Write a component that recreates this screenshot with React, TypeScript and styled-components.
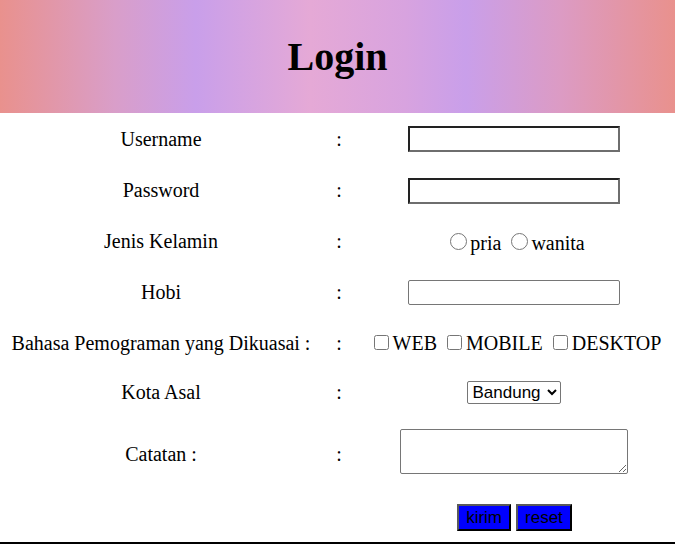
import React from "react";
import styled, { createGlobalStyle } from "styled-components";

const GlobalStyle = createGlobalStyle`
  html, body { margin: 0; padding: 0; background: #ffffff; }
  body { font-family: "Liberation Serif", "Times New Roman", serif; color: #000; }
`;

const Header = styled.header`
  height: 113px;
  display: flex;
  align-items: center;
  justify-content: center;
  background: linear-gradient(
    to right,
    #e9918d 0%,
    #d99ec9 17%,
    #c99fea 29%,
    #e5a9d6 46%,
    #d8a3df 60%,
    #c99fea 69%,
    #dc9bc4 83%,
    #e9918d 100%
  );
`;

const Title = styled.h1`
  margin: 0;
  font-size: 40px;
  font-weight: bold;
  line-height: 46px;
`;

const Form = styled.form`
  display: flex;
  flex-direction: column;
  font-size: 20px;
`;

const Row = styled.div<{ $h: number; $top?: boolean }>`
  display: grid;
  grid-template-columns: 322px 36px 1fr;
  height: ${(p) => p.$h}px;
  align-items: ${(p) => (p.$top ? "start" : "center")};
  box-sizing: border-box;
  padding-top: ${(p) => (p.$top ? "16px" : "0")};
`;

const Label = styled.div<{ $shift?: number }>`
  text-align: center;
  line-height: 23px;
  transform: translateY(${(p) => p.$shift ?? 0}px);
`;

const Colon = styled.div<{ $shift?: number }>`
  text-align: center;
  line-height: 23px;
  padding-right: 2px;
  transform: translateY(${(p) => p.$shift ?? 0}px);
`;

const Field = styled.div`
  display: flex;
  justify-content: center;
  align-items: center;
  line-height: 23px;
`;

const InlineGroup = styled.div`
  white-space: nowrap;
  line-height: 23px;
  padding-right: 3px;
`;

const BoxedInput = styled.input`
  box-sizing: border-box;
  width: 212px;
  height: 26px;
  margin: 0 5px 0 0;
  border-style: solid;
  border-width: 2px;
  border-color: #222222 #6e6e6e #6e6e6e #222222;
  background: #fff;
  padding: 1px 3px;
  font-size: 16px;
`;

const PlainInput = styled.input`
  box-sizing: border-box;
  width: 212px;
  height: 25px;
  margin: 0 5px 0 0;
  border: 1px solid #767676;
  border-radius: 2px;
  background: #fff;
  padding: 1px 3px;
  font-size: 16px;
`;

const Radio = styled.input`
  width: 17px;
  height: 17px;
  margin: 4px 3px 0 5px;
  vertical-align: baseline;
`;

const Check = styled.input`
  width: 15px;
  height: 15px;
  margin: 4px 4px 4px 5px;
  vertical-align: baseline;
`;

const Select = styled.select`
  box-sizing: border-box;
  width: 94px;
  height: 23px;
  margin: 0 6px 0 0;
  font-family: "Liberation Sans", Arial, sans-serif;
  font-size: 17px;
  color: #000;
  border: 1px solid #767676;
  border-radius: 2px;
  background: #fff;
  padding: 0 1px;
`;

const TextArea = styled.textarea`
  box-sizing: border-box;
  width: 228px;
  height: 45px;
  margin: 0 6px 2px 0;
  border: 1px solid #767676;
  border-radius: 2px;
  font-family: "Liberation Mono", monospace;
  font-size: 16px;
`;

const Buttons = styled.div`
  display: flex;
  justify-content: center;
  gap: 5px;
  padding-right: 4px;
`;

const Button = styled.button`
  box-sizing: border-box;
  height: 27px;
  margin: 0;
  padding: 0 7px;
  font-family: "Liberation Sans", Arial, sans-serif;
  font-size: 17px;
  line-height: 19px;
  color: #000;
  background: #0000ff;
  border: 2px outset #6a6a6a;
  border-color: #5a5a5a #3a3a3a #3a3a3a #5a5a5a;
`;

const Divider = styled.div`
  height: 2px;
  background: #000;
`;

export default function App() {
  return (
    <>
      <GlobalStyle />
      <Header>
        <Title>Login</Title>
      </Header>
      <Form onSubmit={(e) => e.preventDefault()}>
        <Row $h={52}>
          <Label>Username</Label>
          <Colon>:</Colon>
          <Field>
            <BoxedInput type="text" />
          </Field>
        </Row>
        <Row $h={51}>
          <Label>Password</Label>
          <Colon>:</Colon>
          <Field>
            <BoxedInput type="password" />
          </Field>
        </Row>
        <Row $h={51}>
          <Label>Jenis Kelamin</Label>
          <Colon>:</Colon>
          <Field>
            <InlineGroup>
              <Radio type="radio" name="jk" />
              pria <Radio type="radio" name="jk" />
              wanita
            </InlineGroup>
          </Field>
        </Row>
        <Row $h={51}>
          <Label>Hobi</Label>
          <Colon>:</Colon>
          <Field>
            <PlainInput type="text" />
          </Field>
        </Row>
        <Row $h={50}>
          <Label>Bahasa Pemograman yang Dikuasai :</Label>
          <Colon>:</Colon>
          <Field>
            <InlineGroup>
              <Check type="checkbox" />
              WEB <Check type="checkbox" />
              MOBILE <Check type="checkbox" />
              DESKTOP
            </InlineGroup>
          </Field>
        </Row>
        <Row $h={49}>
          <Label>Kota Asal</Label>
          <Colon>:</Colon>
          <Field>
            <Select defaultValue="Bandung">
              <option>Bandung</option>
              <option>Jakarta</option>
              <option>Surabaya</option>
            </Select>
          </Field>
        </Row>
        <Row $h={71}>
          <Label $shift={2}>Catatan :</Label>
          <Colon $shift={2}>:</Colon>
          <Field>
            <TextArea />
          </Field>
        </Row>
        <Row $h={54} $top>
          <div />
          <div />
          <Buttons>
            <Button type="submit">kirim</Button>
            <Button type="reset">reset</Button>
          </Buttons>
        </Row>
      </Form>
      <Divider />
    </>
  );
}
